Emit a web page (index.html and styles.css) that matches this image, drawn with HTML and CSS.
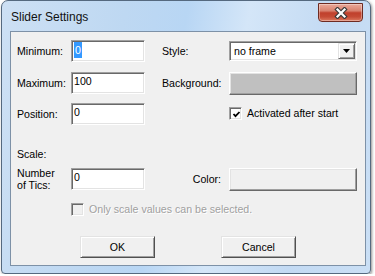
FILE: index.html
```html
<!DOCTYPE html>
<html lang="en">
<head>
    <meta charset="UTF-8">
    <meta name="viewport" content="width=device-width, initial-scale=1.0">
    <title>Slider Settings</title>
    <link rel="stylesheet" href="styles.css">
</head>
<body>
    <div class="window">
        <div class="titlebar">
            <span class="title">Slider Settings</span>
            <button class="close" title="Close">
                <svg width="14" height="12" viewBox="0 0 14 12">
                    <path d="M3.5 2.5 L10.5 9.5 M10.5 2.5 L3.5 9.5" stroke="#3a3a3a" stroke-width="4.4" stroke-linecap="square"/>
                    <path d="M3.5 2.5 L10.5 9.5 M10.5 2.5 L3.5 9.5" stroke="#fff" stroke-width="2.2" stroke-linecap="square"/>
                </svg>
            </button>
        </div>

        <div class="client">
            <div class="row">
                <span class="lbl">Minimum:</span>
                <div class="edit edit-first"><span class="sel">0</span></div>
                <span class="lbl2">Style:</span>
                <div class="combo">
                    <span>no frame</span>
                    <span class="combo-btn">
                        <svg width="7" height="4" viewBox="0 0 7 4"><polygon points="0,0 7,0 3.5,4" fill="#000"/></svg>
                    </span>
                </div>
            </div>

            <div class="row r2">
                <span class="lbl">Maximum:</span>
                <div class="edit">100</div>
                <span class="lbl2">Background:</span>
                <div class="swatch swatch-bg"></div>
            </div>

            <div class="row r3">
                <span class="lbl">Position:</span>
                <div class="edit">0</div>
                <span class="lbl2"></span>
                <div class="check-row">
                    <span class="check">
                        <svg width="9" height="9" viewBox="0 0 9 9"><polyline points="1.5,4 3.5,6.2 7.5,2" fill="none" stroke="#000" stroke-width="1.8"/></svg>
                    </span>
                    <span>Activated after start</span>
                </div>
            </div>

            <div class="scale">Scale:</div>

            <div class="row r5">
                <span class="lbl lbl-two">Number<br>of Tics:</span>
                <div class="edit">0</div>
                <span class="lbl2 lbl-right">Color:</span>
                <div class="swatch swatch-color"></div>
            </div>

            <div class="row r6">
                <span class="lbl"></span>
                <div class="check-row disabled">
                    <span class="check"></span>
                    <span>Only scale values can be selected.</span>
                </div>
            </div>

            <div class="buttons">
                <button class="btn">OK</button>
                <button class="btn">Cancel</button>
            </div>
        </div>
    </div>
</body>
</html>
```

FILE: styles.css
```css
* {
    box-sizing: border-box;
}
body {
    margin: 0;
    background-color: #fff;
    font-family: "Liberation Sans", Arial, sans-serif;
    font-size: 10.6px;
    color: #000;
}
.window {
    width: 370px;
    height: 274px;
    margin-left: 1px;
    border: 1px solid #55697f;
    border-radius: 7px 7px 4px 4px;
    background: linear-gradient(100deg, #cde0f4 0%, #bed8f2 30%, #b8d6f4 45%, #d4e6f8 60%, #c3daf3 80%, #cadff5 100%);
    box-shadow: 1px 1px 3px rgba(0, 0, 0, 0.45);
}
.titlebar {
    display: flex;
    align-items: flex-start;
    height: 30px;
    padding-left: 9px;
}
.title {
    font-size: 12px;
    line-height: 30px;
    padding-top: 1px;
    color: #111;
}
.close {
    margin-left: auto;
    margin-right: 7px;
    margin-top: 2px;
    width: 45px;
    height: 19px;
    padding: 0;
    border: 1px solid #6e2b22;
    border-radius: 0 0 4px 4px;
    background: linear-gradient(#eaa99a 0%, #d8826f 40%, #c0402c 52%, #c54b35 75%, #dc7a60 100%);
    box-shadow: inset 0 0 0 1px rgba(255, 255, 255, 0.35);
    display: flex;
    align-items: center;
    justify-content: center;
}
.client {
    margin: 0 4px 0 8px;
    height: 235px;
    border: 1px solid #7d91a7;
    background-color: #f0f0f0;
    padding: 8px 0 0 6px;
}
.row {
    display: flex;
    align-items: flex-start;
}
.r2 {
    margin-top: 10px;
}
.r3 {
    margin-top: 8px;
}
.r5 {
    margin-top: 7px;
}
.r6 {
    margin-top: 12px;
}
.lbl {
    width: 54px;
    flex: none;
    line-height: 22px;
}
.lbl-two {
    line-height: 12px;
    margin-top: -1px;
}
.lbl2 {
    width: 67px;
    flex: none;
    margin-left: 17px;
    line-height: 22px;
}
.lbl-right {
    text-align: right;
    padding-right: 8px;
    line-height: 23px;
}
.edit {
    width: 74px;
    height: 22px;
    flex: none;
    background-color: #fff;
    border: 1px solid;
    border-color: #a0a0a0 #fff #fff #a0a0a0;
    box-shadow: inset 1px 1px 0 #696969, inset -1px -1px 0 #e3e3e3;
    padding: 2px 0 0 2px;
    line-height: 13px;
}
.edit-first {
    padding-top: 0;
}
.sel {
    display: inline-block;
    vertical-align: top;
    margin-top: 1px;
    line-height: 16px;
    padding: 0 1px;
    background-color: #3399ff;
    color: #fff;
}
.combo {
    width: 128px;
    height: 20px;
    margin-top: 1px;
    background-color: #fff;
    border: 1px solid;
    border-color: #a0a0a0 #fff #fff #a0a0a0;
    box-shadow: inset 1px 1px 0 #696969, inset -1px -1px 0 #e3e3e3;
    padding: 1px 1px 1px 4px;
    display: flex;
    align-items: center;
    justify-content: space-between;
}
.combo-btn {
    width: 17px;
    height: 16px;
    border: 1px solid;
    border-color: #e3e3e3 #696969 #696969 #e3e3e3;
    box-shadow: inset 1px 1px 0 #fff, inset -1px -1px 0 #a0a0a0;
    background-color: #f0f0f0;
    display: flex;
    align-items: center;
    justify-content: center;
}
.swatch {
    width: 128px;
    height: 23px;
    border: 1px solid;
    border-color: #fff #696969 #696969 #fff;
    box-shadow: inset -1px -1px 0 #a0a0a0, inset 1px 1px 0 #e3e3e3;
}
.swatch-bg {
    background-color: #c0c0c0;
}
.swatch-color {
    background-color: #f0f0f0;
}
.check-row {
    display: flex;
    align-items: center;
    gap: 5px;
    line-height: 13px;
}
.r3 .check-row {
    margin-top: 4px;
}
.check {
    width: 13px;
    height: 13px;
    flex: none;
    background-color: #fff;
    border: 1px solid;
    border-color: #a0a0a0 #fff #fff #a0a0a0;
    box-shadow: inset 1px 1px 0 #696969, inset -1px -1px 0 #e3e3e3;
    display: flex;
    align-items: center;
    justify-content: center;
    padding: 1px 0 0 1px;
}
.disabled {
    color: #a0a0a0;
    text-shadow: 1px 1px 0 #fff;
}
.disabled .check {
    background-color: #f0f0f0;
}
.scale {
    margin-top: 22px;
    line-height: 14px;
}
.buttons {
    display: flex;
    gap: 66px;
    margin: 20px 0 0 63px;
}
.btn {
    width: 75px;
    height: 22px;
    padding: 0;
    font: inherit;
    color: #000;
    background-color: #f0f0f0;
    border: 1px solid;
    border-color: #e3e3e3 #505050 #505050 #e3e3e3;
    box-shadow: inset 1px 1px 0 #fff, inset -1px -1px 0 #a0a0a0;
}
```
